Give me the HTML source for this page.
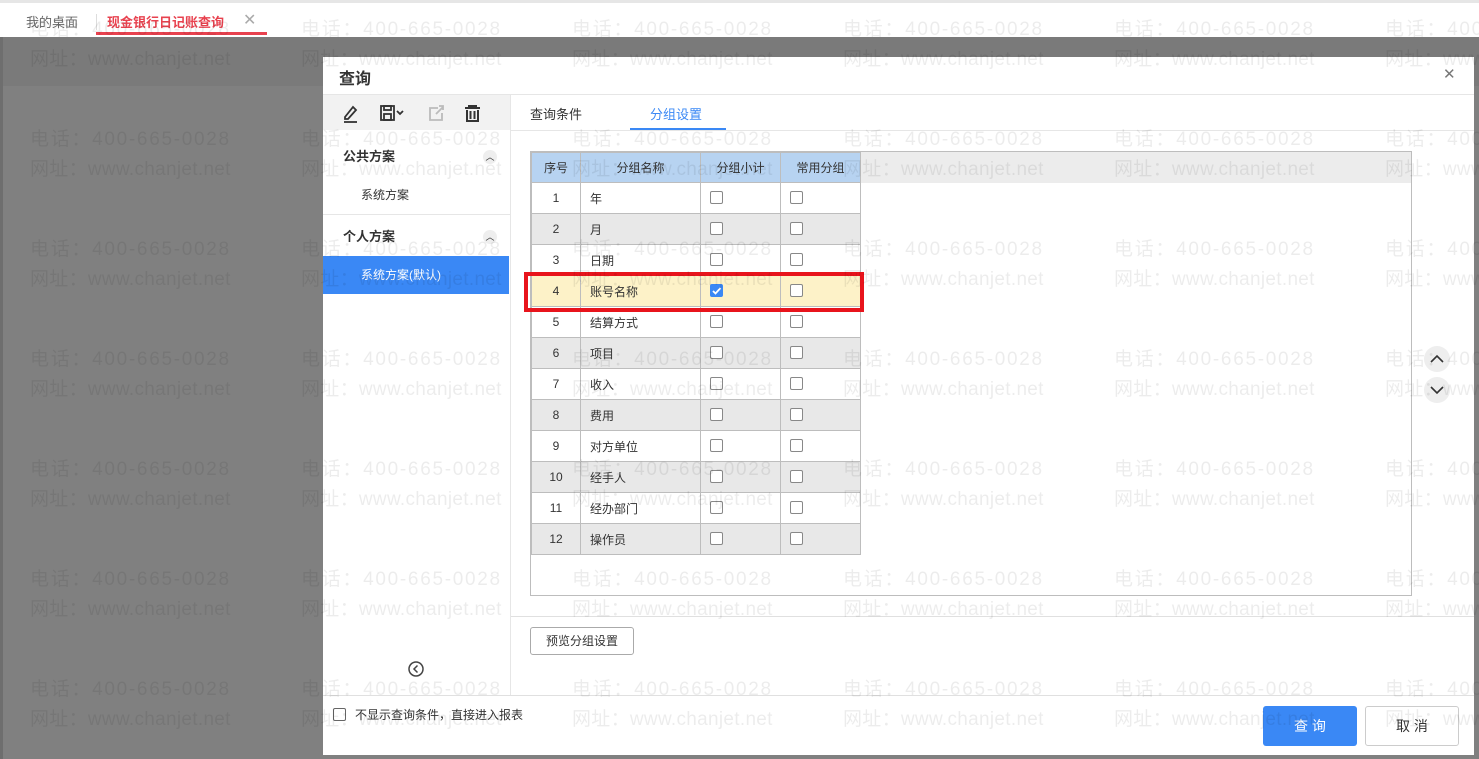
<!DOCTYPE html>
<html><head><meta charset="utf-8"><style>
*{box-sizing:border-box;margin:0;padding:0}
body{width:1479px;height:759px;overflow:hidden;position:relative;background:#808080;font-family:"Liberation Sans","Noto Sans CJK SC",sans-serif;font-size:12px;color:#333}
.a{position:absolute}
.top{left:0;top:0;width:1479px;height:37px;background:#fff;border-top:3px solid #e6e6e6}
.band{left:0;top:37px;width:1479px;height:49px;background:#7a7a7a}
.modal{left:323px;top:57px;width:1151px;height:698px;background:#fff}
.cb{position:absolute;width:13px;height:13px;border:1px solid #888;border-radius:2px;background:#fff}
.wm{position:absolute;font-size:19px;line-height:30px;color:rgba(0,0,0,0.075);white-space:nowrap;z-index:10}
.wm b{font-weight:normal;letter-spacing:1.7px;display:block}
.wm i{font-style:normal;letter-spacing:0.3px;display:block}
table{border-collapse:collapse;position:absolute;left:531px;top:152px;font-size:12px}
td{border:1px solid #bdbdbd;height:31px;padding:0}
.hd td{background:#b7d3f1;text-align:center;height:30px}
tr.g td{background:#e8e8e8}
tr.y td{background:#fdf2c8}
.c1{width:49px;text-align:center}.c2{width:120px;padding-left:9px}.c3{width:80px;position:relative}.c4{width:80px;position:relative}
td .cb{left:9px;top:8px}
</style></head><body>
<div class="a top"></div>
<div class="a" style="left:26px;top:12px;font-size:13px;color:#666">我的桌面</div>
<div class="a" style="left:96px;top:14px;width:1px;height:16px;background:#ddd"></div>
<div class="a" style="left:107px;top:12px;font-size:13px;color:#e8424f;font-weight:bold">现金银行日记账查询</div>
<div class="a" style="left:243px;top:10px;font-size:16px;color:#aaa">✕</div>
<div class="a" style="left:96px;top:32px;width:171px;height:3px;background:#e8424f"></div>
<div class="a band"></div>
<div class="a" style="left:0;top:37px;width:3px;height:722px;background:#6e6e6e"></div>

<div class="a modal"></div>
<div class="a" style="left:339px;top:65px;font-size:16px;font-weight:bold;color:#333">查询</div>
<div class="a" style="left:1443px;top:65px;font-size:15px;color:#777">✕</div>
<div class="a" style="left:323px;top:94px;width:1151px;height:1px;background:#e6e6e6"></div>
<div class="a" style="left:323px;top:95px;width:187px;height:35px;background:#f2f2f2"></div>
<div class="a" style="left:510px;top:95px;width:1px;height:600px;background:#e6e6e6"></div>
<svg class="a" style="left:340px;top:102px" width="150" height="22" viewBox="0 0 150 22" fill="none" stroke="#333" stroke-width="1.8">
<path d="M5 15 L13 5 L16 8 L8 17 L5 17Z"/><path d="M4 20 H17"/>
<rect x="41" y="4" width="13" height="14"/><rect x="44" y="4" width="7" height="4"/><rect x="44" y="12" width="7" height="6"/>
<path d="M57 9 l3 3 l3 -3"/>
<path d="M98 6 H90 V18 H102 V11" stroke="#bbb"/><path d="M96 12 L103 5 M99 4 H103 V8" stroke="#bbb"/>
<path d="M125 6 H140 M129 6 V4 H136 V6 M127 8 V19 H138 V8 M130.5 9 V17 M134.5 9 V17" stroke-width="2"/>
</svg>
<div class="a" style="left:343px;top:146px;font-size:13px;font-weight:bold">公共方案</div>
<div class="a" style="left:483px;top:150px;width:14px;height:14px;border-radius:50%;background:#eee;font-size:9px;text-align:center;line-height:14px">︿</div>
<div class="a" style="left:361px;top:186px;font-size:12px">系统方案</div>
<div class="a" style="left:323px;top:214px;width:187px;height:1px;background:#e6e6e6"></div>
<div class="a" style="left:343px;top:226px;font-size:13px;font-weight:bold">个人方案</div>
<div class="a" style="left:483px;top:230px;width:14px;height:14px;border-radius:50%;background:#eee;font-size:9px;text-align:center;line-height:14px">︿</div>
<div class="a" style="left:323px;top:256px;width:186px;height:38px;background:#3a88f5"></div>
<div class="a" style="left:361px;top:266px;font-size:12px;color:#fff">系统方案(默认)</div>
<svg class="a" style="left:407px;top:660px" width="18" height="18" fill="none" stroke="#444" stroke-width="1.5"><circle cx="9" cy="9" r="7"/><path d="M10.5 5.5 L7 9 L10.5 12.5"/></svg>
<div class="a" style="left:530px;top:104px;font-size:13px">查询条件</div>
<div class="a" style="left:650px;top:104px;font-size:13px;color:#3a88f5">分组设置</div>
<div class="a" style="left:630px;top:128px;width:96px;height:2px;background:#3a88f5"></div>
<div class="a" style="left:511px;top:130px;width:963px;height:1px;background:#e6e6e6"></div>
<div class="a" style="left:530px;top:151px;width:882px;height:445px;border:1px solid #bdbdbd;background:#fff"></div>
<div class="a" style="left:531px;top:152px;width:880px;height:31px;background:#ececec"></div>
<table>
<tr class="hd"><td class="c1">序号</td><td style="width:120px">分组名称</td><td style="width:80px">分组小计</td><td style="width:80px">常用分组</td></tr>
<tr><td class="c1">1</td><td class="c2">年</td><td class="c3"><span class="cb"></span></td><td class="c4"><span class="cb"></span></td></tr>
<tr class="g"><td class="c1">2</td><td class="c2">月</td><td class="c3"><span class="cb"></span></td><td class="c4"><span class="cb"></span></td></tr>
<tr><td class="c1">3</td><td class="c2">日期</td><td class="c3"><span class="cb"></span></td><td class="c4"><span class="cb"></span></td></tr>
<tr class="y"><td class="c1">4</td><td class="c2">账号名称</td><td class="c3"><span class="cb" style="background:#3a88f5;border-color:#3a88f5"><svg width="11" height="11" style="position:absolute;left:0;top:0" fill="none" stroke="#fff" stroke-width="1.8"><path d="M2 6 L4.5 8.5 L9.5 3"/></svg></span></td><td class="c4"><span class="cb"></span></td></tr>
<tr><td class="c1">5</td><td class="c2">结算方式</td><td class="c3"><span class="cb"></span></td><td class="c4"><span class="cb"></span></td></tr>
<tr class="g"><td class="c1">6</td><td class="c2">项目</td><td class="c3"><span class="cb"></span></td><td class="c4"><span class="cb"></span></td></tr>
<tr><td class="c1">7</td><td class="c2">收入</td><td class="c3"><span class="cb"></span></td><td class="c4"><span class="cb"></span></td></tr>
<tr class="g"><td class="c1">8</td><td class="c2">费用</td><td class="c3"><span class="cb"></span></td><td class="c4"><span class="cb"></span></td></tr>
<tr><td class="c1">9</td><td class="c2">对方单位</td><td class="c3"><span class="cb"></span></td><td class="c4"><span class="cb"></span></td></tr>
<tr class="g"><td class="c1">10</td><td class="c2">经手人</td><td class="c3"><span class="cb"></span></td><td class="c4"><span class="cb"></span></td></tr>
<tr><td class="c1">11</td><td class="c2">经办部门</td><td class="c3"><span class="cb"></span></td><td class="c4"><span class="cb"></span></td></tr>
<tr class="g"><td class="c1">12</td><td class="c2">操作员</td><td class="c3"><span class="cb"></span></td><td class="c4"><span class="cb"></span></td></tr>
</table>
<div class="a" style="left:524px;top:272px;width:340px;height:40px;border:4px solid #e8141c"></div>
<svg class="a" style="left:1423px;top:345px" width="28" height="60" fill="none" stroke="#333" stroke-width="1.6"><circle cx="14" cy="14" r="13" fill="#eee" stroke="none"/><circle cx="14" cy="45" r="13" fill="#eee" stroke="none"/><path d="M8 17 L14 11 L20 17"/><path d="M8 42 L14 48 L20 42"/></svg>
<div class="a" style="left:511px;top:616px;width:963px;height:1px;background:#e0e0e0"></div>
<div class="a" style="left:530px;top:627px;width:104px;height:28px;border:1px solid #aaa;border-radius:3px;text-align:center;line-height:26px;font-size:12px">预览分组设置</div>
<div class="a" style="left:323px;top:695px;width:1151px;height:1px;background:#e0e0e0"></div>
<span class="cb" style="left:333px;top:708px;border-color:#666"></span>
<div class="a" style="left:355px;top:706px;font-size:12px">不显示查询条件，直接进入报表</div>
<div class="a" style="left:1263px;top:706px;width:94px;height:40px;background:#3a88f5;border-radius:3px;color:#fff;font-size:14px;text-align:center;line-height:40px">查 询</div>
<div class="a" style="left:1365px;top:706px;width:94px;height:40px;border:1px solid #ccc;border-radius:3px;font-size:14px;text-align:center;line-height:38px;background:#fff">取 消</div>

<div class="wm" style="left:30px;top:15px"><b>电话：400-665-0028</b><i>网址：www.chanjet.net</i></div>
<div class="wm" style="left:301px;top:15px"><b>电话：400-665-0028</b><i>网址：www.chanjet.net</i></div>
<div class="wm" style="left:572px;top:15px"><b>电话：400-665-0028</b><i>网址：www.chanjet.net</i></div>
<div class="wm" style="left:843px;top:15px"><b>电话：400-665-0028</b><i>网址：www.chanjet.net</i></div>
<div class="wm" style="left:1114px;top:15px"><b>电话：400-665-0028</b><i>网址：www.chanjet.net</i></div>
<div class="wm" style="left:1385px;top:15px"><b>电话：400-665-0028</b><i>网址：www.chanjet.net</i></div>
<div class="wm" style="left:30px;top:125px"><b>电话：400-665-0028</b><i>网址：www.chanjet.net</i></div>
<div class="wm" style="left:301px;top:125px"><b>电话：400-665-0028</b><i>网址：www.chanjet.net</i></div>
<div class="wm" style="left:572px;top:125px"><b>电话：400-665-0028</b><i>网址：www.chanjet.net</i></div>
<div class="wm" style="left:843px;top:125px"><b>电话：400-665-0028</b><i>网址：www.chanjet.net</i></div>
<div class="wm" style="left:1114px;top:125px"><b>电话：400-665-0028</b><i>网址：www.chanjet.net</i></div>
<div class="wm" style="left:1385px;top:125px"><b>电话：400-665-0028</b><i>网址：www.chanjet.net</i></div>
<div class="wm" style="left:30px;top:235px"><b>电话：400-665-0028</b><i>网址：www.chanjet.net</i></div>
<div class="wm" style="left:301px;top:235px"><b>电话：400-665-0028</b><i>网址：www.chanjet.net</i></div>
<div class="wm" style="left:572px;top:235px"><b>电话：400-665-0028</b><i>网址：www.chanjet.net</i></div>
<div class="wm" style="left:843px;top:235px"><b>电话：400-665-0028</b><i>网址：www.chanjet.net</i></div>
<div class="wm" style="left:1114px;top:235px"><b>电话：400-665-0028</b><i>网址：www.chanjet.net</i></div>
<div class="wm" style="left:1385px;top:235px"><b>电话：400-665-0028</b><i>网址：www.chanjet.net</i></div>
<div class="wm" style="left:30px;top:345px"><b>电话：400-665-0028</b><i>网址：www.chanjet.net</i></div>
<div class="wm" style="left:301px;top:345px"><b>电话：400-665-0028</b><i>网址：www.chanjet.net</i></div>
<div class="wm" style="left:572px;top:345px"><b>电话：400-665-0028</b><i>网址：www.chanjet.net</i></div>
<div class="wm" style="left:843px;top:345px"><b>电话：400-665-0028</b><i>网址：www.chanjet.net</i></div>
<div class="wm" style="left:1114px;top:345px"><b>电话：400-665-0028</b><i>网址：www.chanjet.net</i></div>
<div class="wm" style="left:1385px;top:345px"><b>电话：400-665-0028</b><i>网址：www.chanjet.net</i></div>
<div class="wm" style="left:30px;top:455px"><b>电话：400-665-0028</b><i>网址：www.chanjet.net</i></div>
<div class="wm" style="left:301px;top:455px"><b>电话：400-665-0028</b><i>网址：www.chanjet.net</i></div>
<div class="wm" style="left:572px;top:455px"><b>电话：400-665-0028</b><i>网址：www.chanjet.net</i></div>
<div class="wm" style="left:843px;top:455px"><b>电话：400-665-0028</b><i>网址：www.chanjet.net</i></div>
<div class="wm" style="left:1114px;top:455px"><b>电话：400-665-0028</b><i>网址：www.chanjet.net</i></div>
<div class="wm" style="left:1385px;top:455px"><b>电话：400-665-0028</b><i>网址：www.chanjet.net</i></div>
<div class="wm" style="left:30px;top:565px"><b>电话：400-665-0028</b><i>网址：www.chanjet.net</i></div>
<div class="wm" style="left:301px;top:565px"><b>电话：400-665-0028</b><i>网址：www.chanjet.net</i></div>
<div class="wm" style="left:572px;top:565px"><b>电话：400-665-0028</b><i>网址：www.chanjet.net</i></div>
<div class="wm" style="left:843px;top:565px"><b>电话：400-665-0028</b><i>网址：www.chanjet.net</i></div>
<div class="wm" style="left:1114px;top:565px"><b>电话：400-665-0028</b><i>网址：www.chanjet.net</i></div>
<div class="wm" style="left:1385px;top:565px"><b>电话：400-665-0028</b><i>网址：www.chanjet.net</i></div>
<div class="wm" style="left:30px;top:675px"><b>电话：400-665-0028</b><i>网址：www.chanjet.net</i></div>
<div class="wm" style="left:301px;top:675px"><b>电话：400-665-0028</b><i>网址：www.chanjet.net</i></div>
<div class="wm" style="left:572px;top:675px"><b>电话：400-665-0028</b><i>网址：www.chanjet.net</i></div>
<div class="wm" style="left:843px;top:675px"><b>电话：400-665-0028</b><i>网址：www.chanjet.net</i></div>
<div class="wm" style="left:1114px;top:675px"><b>电话：400-665-0028</b><i>网址：www.chanjet.net</i></div>
<div class="wm" style="left:1385px;top:675px"><b>电话：400-665-0028</b><i>网址：www.chanjet.net</i></div>
</body></html>
